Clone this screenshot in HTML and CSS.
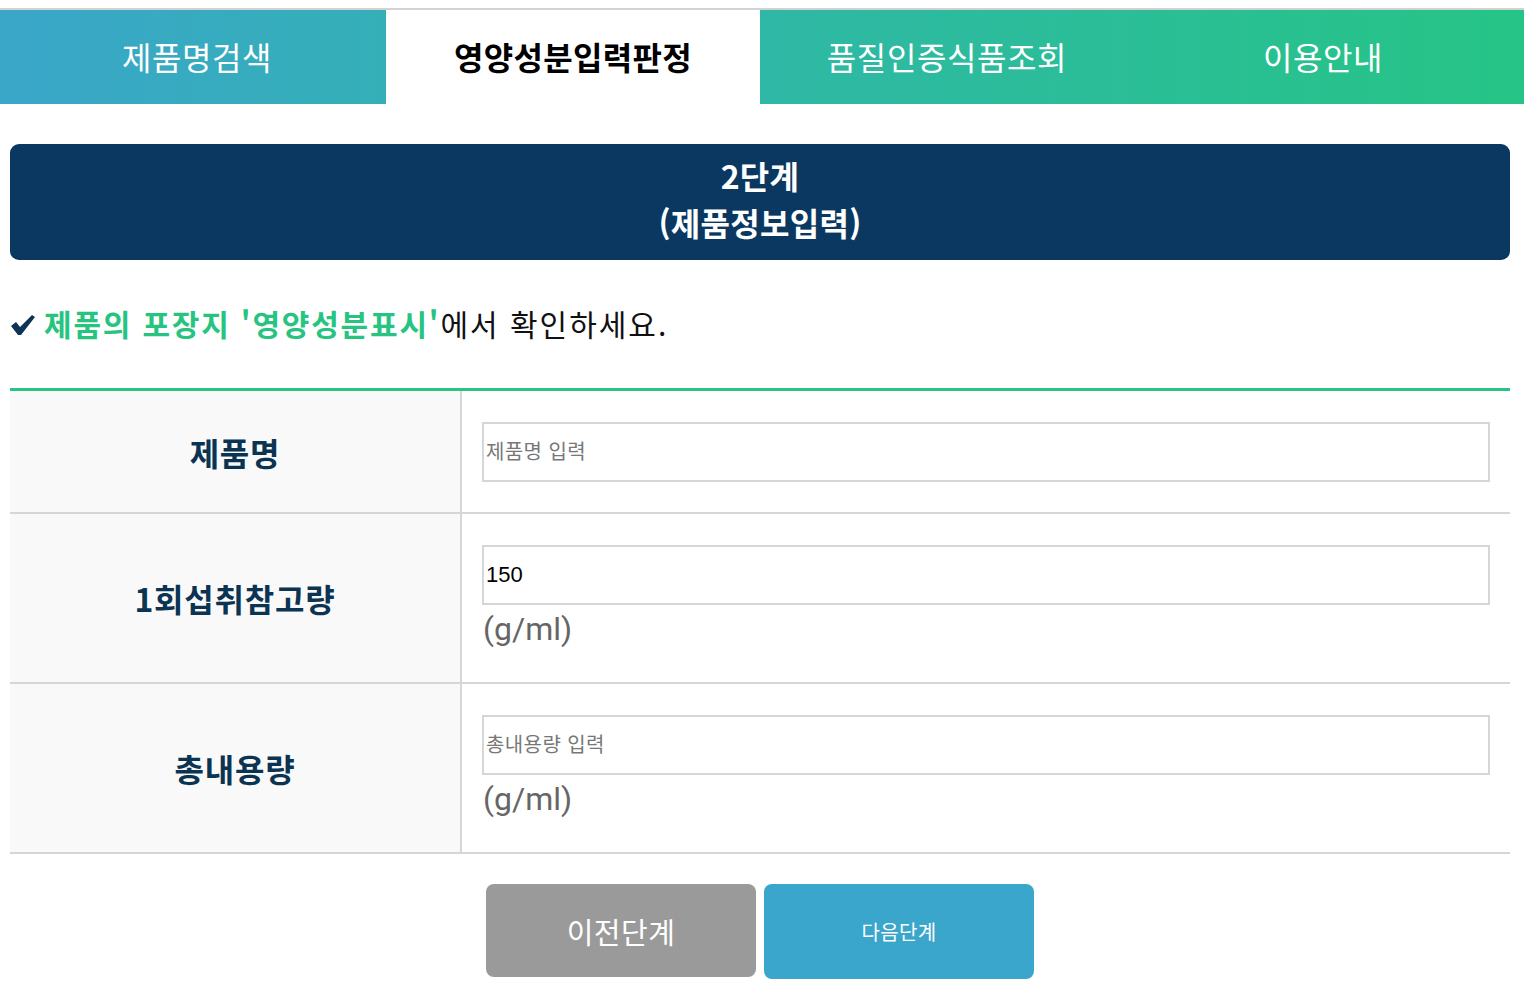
FILE: index.html
```html
<!DOCTYPE html>
<html lang="ko">
<head>
<meta charset="utf-8">
<title>영양성분입력판정</title>
<link rel="stylesheet" href="styles.css">
</head>
<body>
<nav class="tabs">
  <a class="tab first">제품명검색</a>
  <a class="tab active">영양성분입력판정</a>
  <a class="tab">품질인증식품조회</a>
  <a class="tab last">이용안내</a>
</nav>
<main class="content">
  <h1 class="step">2단계<br>(제품정보입력)</h1>
  <p class="notice">
    <svg class="check" width="26" height="22" viewBox="0 0 26 22"><path d="M1 12 L6 8 L10 13 L22 1 L25 3 L11 21 L8 21 Z" fill="#0d3355"/></svg>
    <strong>제품의 포장지 '영양성분표시'</strong>에서 확인하세요.
  </p>
  <div class="form">
    <div class="row">
      <div class="label">제품명</div>
      <div class="field"><input class="input" type="text" placeholder="제품명 입력"></div>
    </div>
    <div class="row">
      <div class="label">1회섭취참고량</div>
      <div class="field"><input class="input" type="text" value="150"><span class="unit">(g/ml)</span></div>
    </div>
    <div class="row">
      <div class="label">총내용량</div>
      <div class="field"><input class="input" type="text" placeholder="총내용량 입력"><span class="unit">(g/ml)</span></div>
    </div>
  </div>
  <div class="buttons">
    <button class="btn prev">이전단계</button>
    <button class="btn next">다음단계</button>
  </div>
</main>
</body>
</html>
```
FILE: styles.css
```css
* { box-sizing: border-box; }
body {
  margin: 0;
  padding-top: 8px;
  font-family: "Noto Sans CJK KR", "Noto Sans", sans-serif;
  background: #fff;
}
.tabs {
  display: grid;
  grid-template-columns: 386px 374px 374px 1fr;
  border-top: 2px solid #d2d2d2;
  height: 96px;
  background: linear-gradient(90deg, #3aa6c9 0%, #2fb8a6 50%, #26c486 100%);
}
.tab {
  display: flex;
  align-items: center;
  justify-content: center;
  color: #fff;
  font-size: 32px;
  letter-spacing: 0.6px;
  padding-bottom: 2px;
}
.tab.first { padding-left: 8px; }
.tab.last { padding-right: 12px; }
.tab.active {
  background: #fff;
  color: #000;
  font-weight: 700;
  letter-spacing: 0.3px;
}
.content {
  padding: 0 14px 0 10px;
}
.step {
  margin: 40px 0 0;
  height: 116px;
  border-radius: 9px;
  background: #0a3861;
  color: #fff;
  font-size: 32px;
  font-weight: 700;
  line-height: 47px;
  text-align: center;
  padding-top: 8px;
  letter-spacing: 0.3px;
}
.notice {
  margin: 40px 0 0;
  display: flex;
  align-items: center;
  font-size: 30px;
  line-height: 46px;
  color: #111;
  letter-spacing: 2px;
}
.check { margin-right: 8px; margin-top: 4px; }
.notice strong { color: #26c480; font-weight: 700; letter-spacing: 1.8px; }
.form {
  margin-top: 42px;
  border-top: 3px solid #27c483;
}
.row {
  display: grid;
  grid-template-columns: 452px 1fr;
  border-bottom: 2px solid #d4d7da;
}
.row:first-child .field { padding-bottom: 30px; }
.label {
  background: #f9f9f9;
  border-right: 2px solid #d4d7da;
  display: flex;
  align-items: center;
  justify-content: center;
  font-size: 32px;
  font-weight: 700;
  color: #0b3452;
  letter-spacing: 0.8px;
}
.field {
  padding: 31px 20px 29px 20px;
  display: flex;
  flex-direction: column;
}
.input {
  height: 60px;
  border: 2px solid #d4d7da;
  padding: 0 2px;
  font-family: "Liberation Sans", "Noto Sans CJK KR", sans-serif;
  font-size: 22px;
  color: #000;
  outline: none;
}
.input::placeholder {
  color: #777;
  font-family: "Noto Sans CJK KR", sans-serif;
  font-size: 20px;
  letter-spacing: 0.4px;
}
.unit {
  font-family: "Roboto", "Noto Sans", sans-serif;
  font-size: 32px;
  line-height: 48px;
  color: #666;
  padding-left: 1px;
}
.buttons {
  display: flex;
  justify-content: center;
  gap: 8px;
  margin-top: 30px;
}
.btn {
  width: 270px;
  border: none;
  border-radius: 8px;
  color: #fff;
  font-family: "Noto Sans CJK KR", sans-serif;
  cursor: pointer;
}
.btn.prev {
  height: 93px;
  background: #9a9a9a;
  font-size: 29px;
  letter-spacing: 0.5px;
}
.btn.next {
  height: 95px;
  background: #3aa6cb;
  font-size: 20px;
  letter-spacing: 0.3px;
}
```
